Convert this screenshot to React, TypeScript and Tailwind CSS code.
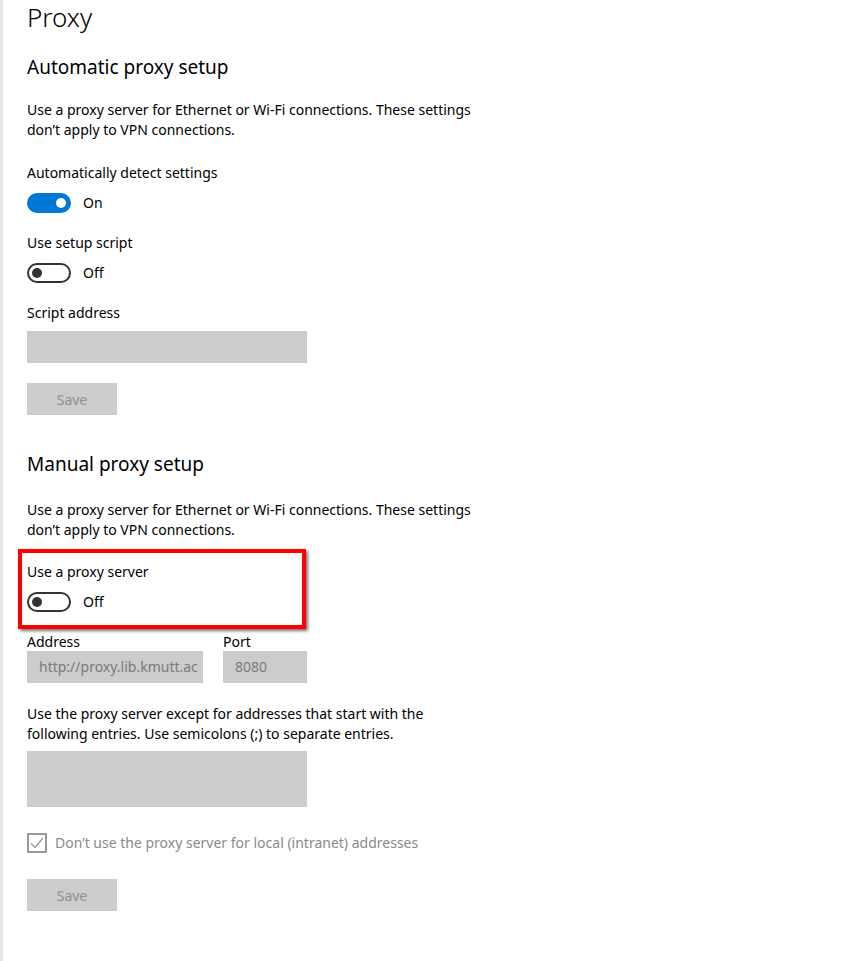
import type { ReactNode } from 'react'

function Toggle({ on }: { on: boolean }) {
  return (
    <div className="flex items-center h-5">
      {on ? (
        <div className="w-11 h-5 rounded-full bg-[#0078d7] flex items-center justify-end pr-[5px]">
          <div className="w-2.5 h-2.5 rounded-full bg-white" />
        </div>
      ) : (
        <div className="w-11 h-5 rounded-full border-2 border-[#333333] flex items-center pl-[3px]">
          <div className="w-2.5 h-2.5 rounded-full bg-[#333333]" />
        </div>
      )}
      <span className="ml-3 text-[14px] leading-5">{on ? 'On' : 'Off'}</span>
    </div>
  )
}

function Field({ className, children }: { className: string; children?: ReactNode }) {
  return (
    <div className={`bg-[#cccccc] overflow-hidden whitespace-nowrap text-[14px] leading-8 text-[#7a7a7a] pl-3 ${className}`}>
      {children}
    </div>
  )
}

function SaveButton({ className }: { className: string }) {
  return (
    <div className={`w-[90px] h-8 bg-[#cccccc] flex items-center justify-center text-[14px] text-[#8f8f8f] ${className}`}>
      Save
    </div>
  )
}

export default function App() {
  return (
    <div className="min-h-[961px] w-[861px] bg-white border-l-[3px] border-[#e6e6e6] pl-6 text-black font-['Noto_Sans',sans-serif]">
      <div className="flex flex-col items-start">
        <h1 className="text-[26px] leading-[34px] font-light">Proxy</h1>

        {/* Automatic */}
        <h2 className="mt-[19px] text-[19px] leading-7">Automatic proxy setup</h2>
        <p className="mt-[19px] text-[14px] leading-5">
          Use a proxy server for Ethernet or Wi-Fi connections. These settings
          <br />
          don’t apply to VPN connections.
        </p>

        <div className="mt-[23px] text-[14px] leading-5">Automatically detect settings</div>
        <div className="mt-[10px]">
          <Toggle on />
        </div>

        <div className="mt-5 text-[14px] leading-5">Use setup script</div>
        <div className="mt-[10px]">
          <Toggle on={false} />
        </div>

        <div className="mt-5 text-[14px] leading-5">Script address</div>
        <Field className="mt-2 w-[280px] h-8" />
        <SaveButton className="mt-5" />

        {/* Manual */}
        <h2 className="mt-[35px] text-[19px] leading-7">Manual proxy setup</h2>
        <p className="mt-[22px] text-[14px] leading-5">
          Use a proxy server for Ethernet or Wi-Fi connections. These settings
          <br />
          don’t apply to VPN connections.
        </p>

        <div className="relative mt-[22px]">
          <div className="absolute left-[-9px] top-[-13px] w-[288px] h-[80px] border-4 border-[#ff0000] shadow-[2px_2px_3px_rgba(0,0,0,0.55)]" />
          <div className="text-[14px] leading-5">Use a proxy server</div>
          <div className="mt-[10px]">
            <Toggle on={false} />
          </div>
        </div>

        <div className="mt-5 flex gap-5">
          <div className="flex flex-col">
            <div className="text-[14px] leading-5">Address</div>
            <Field className="mt-[-1px] w-[176px] h-8">http://proxy.lib.kmutt.ac</Field>
          </div>
          <div className="flex flex-col">
            <div className="text-[14px] leading-5">Port</div>
            <Field className="mt-[-1px] w-[84px] h-8">8080</Field>
          </div>
        </div>

        <p className="mt-[21px] text-[14px] leading-5">
          Use the proxy server except for addresses that start with the
          <br />
          following entries. Use semicolons (;) to separate entries.
        </p>
        <Field className="mt-[7px] w-[280px] h-14" />

        <div className="mt-[26px] flex items-center gap-2">
          <div className="w-5 h-5 border-2 border-[#999999] flex items-center justify-center">
            <svg width="14" height="12" viewBox="0 0 14 12" fill="none">
              <path d="M1 6.5 L5 10.5 L13 1" stroke="#999999" strokeWidth="1.3" />
            </svg>
          </div>
          <span className="text-[14px] leading-5 text-[#8a8a8a]">
            Don’t use the proxy server for local (intranet) addresses
          </span>
        </div>

        <SaveButton className="mt-[26px]" />
      </div>
    </div>
  )
}
